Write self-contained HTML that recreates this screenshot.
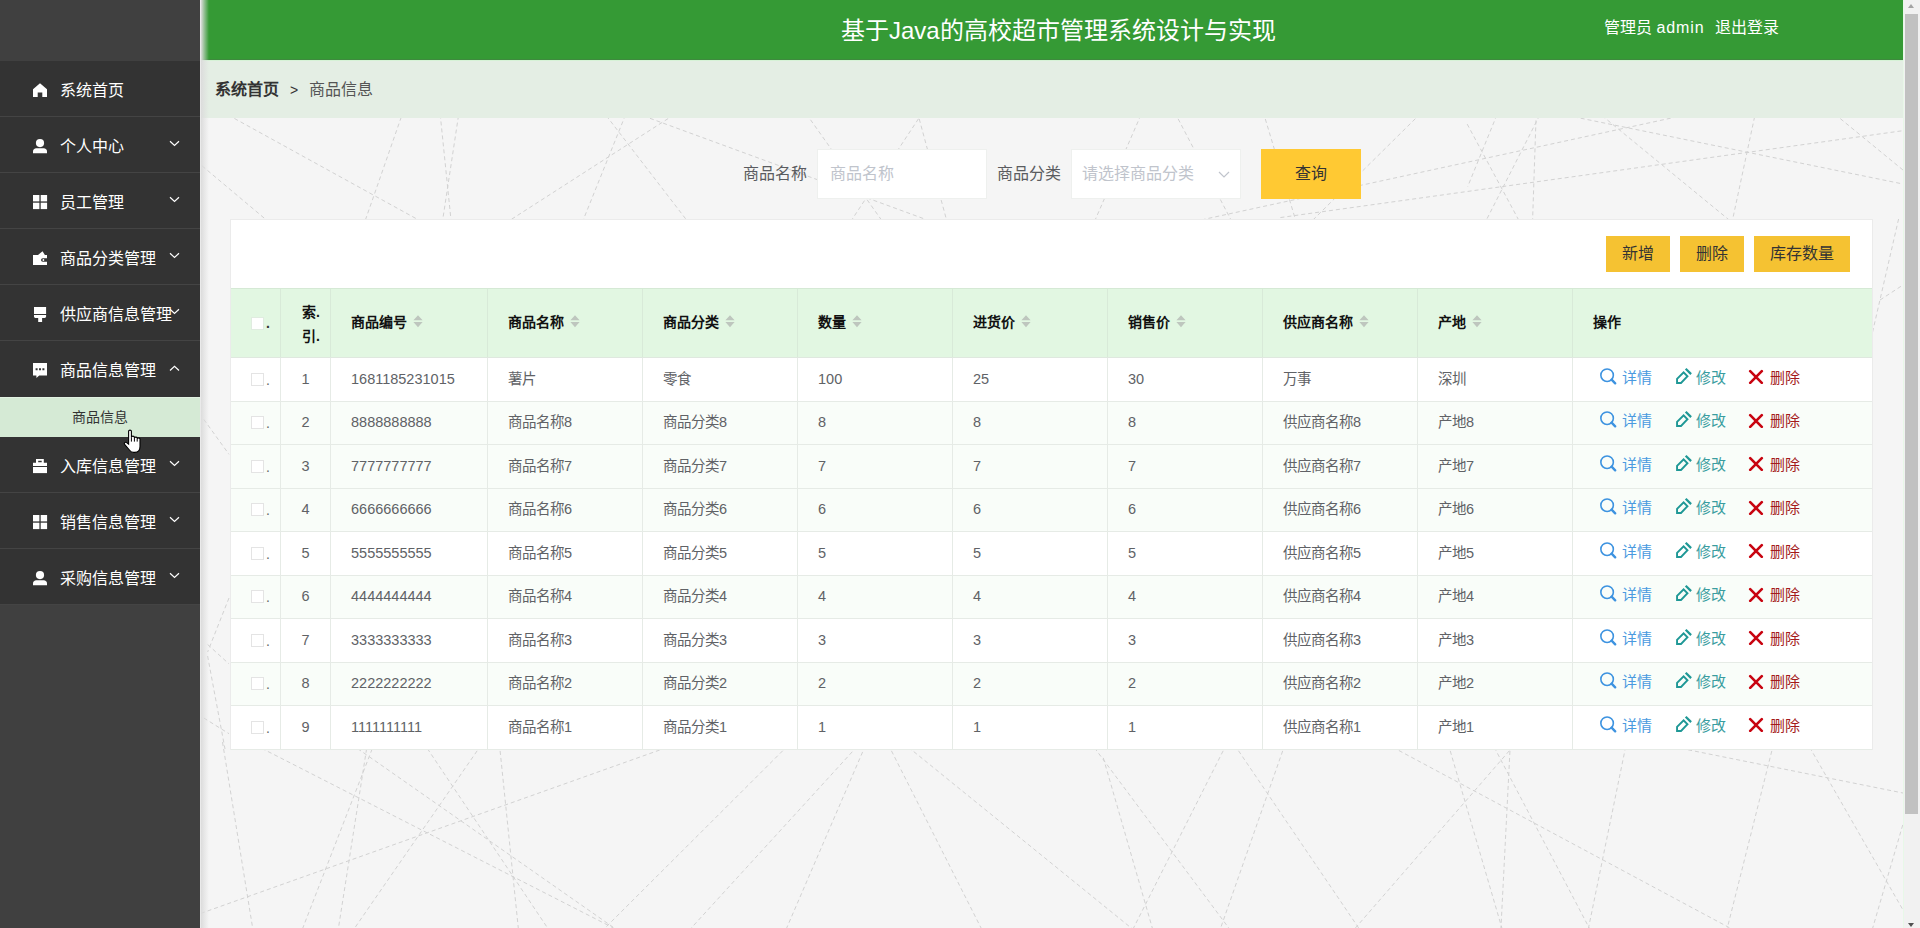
<!DOCTYPE html>
<html lang="zh-CN">
<head>
<meta charset="utf-8">
<style>
*{box-sizing:border-box;margin:0;padding:0}
html,body{width:1920px;height:928px;overflow:hidden;font-family:"Liberation Sans",sans-serif;background:#f5f5f5}
#side{position:absolute;left:0;top:0;width:200px;height:928px;background:#404040}
#side .item{position:absolute;left:0;width:200px;height:56px;background:#333;border-bottom:1px solid #444;color:#fff;font-size:16px}
#side .item.nob{border-bottom:none}
#side .ic{position:absolute;left:33px;top:22px}
#side .tx{position:absolute;left:60px;top:19px;line-height:22px;white-space:nowrap}
#side .ar{position:absolute;left:169px;top:23px}
#side .ar.up{top:24px}
#side .sub{position:absolute;left:0;width:200px;height:40px;background:#d5ead5;border-top:1px solid #e2f2e2;color:#333;font-size:14px;text-align:center;line-height:38px}
#main{position:absolute;left:200px;top:0;width:1703px;height:928px;background:#f5f5f5;overflow:hidden}
#bg{position:absolute;left:0;top:0;width:1703px;height:928px}
#lshadow{position:absolute;left:0;top:0;width:9px;height:928px;background:linear-gradient(to right,#eaeaea 0,#eaeaea 1px,#dcdcdc 1px,rgba(220,220,220,.6) 4px,rgba(230,230,230,0) 9px);z-index:5}
#hdr{position:absolute;left:0;top:0;width:1703px;height:60px;background:#359a35;border-bottom:1px solid #3e8a3e;color:#fff}
#hdr .title{position:absolute;left:641px;top:16px;font-size:24px;line-height:30px;white-space:nowrap}
#hdr .user{position:absolute;left:1404px;top:17px;font-size:16px;line-height:22px;white-space:nowrap}
#hdr .out{margin-left:10px}
#hdr .adm{letter-spacing:0.9px}
#crumb{position:absolute;left:0;top:60px;width:1703px;height:58px;background:#e4eee4;border-top:1px solid #d6f2d6;font-size:16px;color:#333}
#crumb .a{position:absolute;left:15px;top:18px;line-height:22px;font-weight:bold;color:#333}
#crumb .sep{position:absolute;left:90px;top:18px;line-height:22px;font-size:14px}
#crumb .b{position:absolute;left:109px;top:18px;line-height:22px;color:#555}
#search .lbl{position:absolute;top:163px;font-size:16px;line-height:22px;color:#5a5c60;white-space:nowrap}
#search .l1{left:543px}
#search .l2{left:797px}
#search .inp{position:absolute;top:149px;height:50px;background:#fff;border:1px solid #eef0ee;font-size:16px;color:#c0c4cc;line-height:48px;padding-left:12px;white-space:nowrap}
#search .i1{left:617px;width:170px}
#search .i2{left:871px;width:170px;padding-left:10px}
#search .selar{position:absolute;left:146px;top:21px}
#search .qbtn{position:absolute;left:1061px;top:149px;width:100px;height:50px;background:#ffc933;color:#333;font-size:16px;line-height:50px;text-align:center}
#panel{position:absolute;left:30px;top:219px;width:1643px;height:531px;background:#fff;border:1px solid #ebebeb}
#panel .btn{position:absolute;top:16px;height:36px;background:#f5c232;color:#333;font-size:16px;line-height:36px;text-align:center}
#panel .b1{left:1375px;width:64px}
#panel .b2{left:1449px;width:64px}
#panel .b3{left:1523px;width:96px}
.thead{position:absolute;left:0;top:68px;width:1641px;height:70px;background:#e2f7e2;border-top:1px solid #d5e9d5;border-bottom:1px solid #dfe8df}
.th{position:absolute;top:0;height:68px;border-left:1px solid #d8ead8}
.th:first-child{border-left:none}
.th .htx{position:absolute;left:20px;top:23px;line-height:20px;font-size:14px;font-weight:bold;color:#111;white-space:nowrap}
.th .sort{position:absolute;top:27px}
.th.idx .l1{position:absolute;left:21px;top:13px;font-size:14px;font-weight:bold;line-height:20px;color:#111}
.th.idx .l2{position:absolute;left:21px;top:37px;font-size:14px;font-weight:bold;line-height:20px;color:#111}
.cb{position:absolute;left:20px;width:13px;height:13px;background:#fff;border:1px solid #e4e4e4}
.hcb{top:28px;border-color:#e0ece0}
.dot{position:absolute;left:35px;font-size:14px;font-weight:bold;color:#333}
.hdot{top:24px;line-height:20px}
.tr{position:absolute;left:0;width:1641px;background:#fff;border-bottom:1px solid #e6ebe6}
.tr.stripe{background:#f9fdf9}
.td{position:absolute;top:0;height:100%;border-left:1px solid #e6ebe6}
.td:first-child{border-left:none}
.td .cb{top:50%;margin-top:-7px}
.td .dot{top:50%;margin-top:-10px;line-height:20px;font-weight:normal;color:#666}
.td .tx{position:absolute;left:20px;top:50%;margin-top:-12px;line-height:22px;font-size:14.5px;color:#606266;white-space:nowrap}
.td.c .tx{left:0;width:100%;text-align:center}
.ops .op{position:absolute;top:50%;margin-top:-13px;height:20px;white-space:nowrap}
.ops .op svg{position:absolute;left:0;top:0px}
.ops .op b{position:absolute;left:22px;top:1px;line-height:20px;font-size:15px;font-weight:normal}
.ops .o1{left:27px}
.ops .o1 b{color:#4a9ae0}
.ops .o2{left:102px}
.ops .o2 b{color:#3a9da0;left:21px}
.ops .o3{left:176px}
.ops .o3 b{color:#a41a1a;left:21px}
#scroll{position:absolute;left:1903px;top:0;width:17px;height:928px;background:#f1f1f1;border-left:1px solid #e8f8e8}
#scroll .thumb{position:absolute;left:1px;top:14px;width:13px;height:800px;background:#c1c1c1}
#scroll .up{position:absolute;left:4px;top:4px;width:0;height:0;border-left:3.5px solid transparent;border-right:3.5px solid transparent;border-bottom:4px solid #a3a3a3}
#scroll .down{position:absolute;left:4px;top:923px;width:0;height:0;border-left:3.5px solid transparent;border-right:3.5px solid transparent;border-top:4px solid #505050}
#cursor{position:absolute;left:123px;top:429px;z-index:20}
.th .htx .sort{position:relative;top:1px;margin-left:6px;vertical-align:baseline}
.ops .o2 svg{top:1px}
.ops .o3 svg{top:1.5px;left:-1px}
.ops .o1 svg{top:1px}

</style>
</head>
<body>
<div id="side">
<div class="item" style="top:61px"><svg class="ic" width="15" height="16" viewBox="0 0 15 16" fill="#fff"><path d="M7 0.2 L14 6.2 V14 H9.3 V9.5 H4.7 V14 H0 V6.2 Z"/></svg><span class="tx">系统首页</span></div><div class="item" style="top:117px"><svg class="ic" width="15" height="16" viewBox="0 0 15 16" fill="#fff"><circle cx="7" cy="4.1" r="4.1"/><path d="M0 14.2 V12.2 C0 10.6 1.5 9.2 3.2 9.2 H10.8 C12.5 9.2 14 10.6 14 12.2 V14.2 Z"/></svg><span class="tx">个人中心</span><svg class="ar" width="12" height="8" viewBox="0 0 12 8"><path d="M1 1.3 L5.5 5.5 L10 1.3" fill="none" stroke="#fff" stroke-width="1.2"/></svg></div><div class="item" style="top:173px"><svg class="ic" width="15" height="16" viewBox="0 0 15 16" fill="#fff"><rect x="0" y="0" width="6.4" height="6.4"/><rect x="7.7" y="0" width="6.4" height="6.4"/><rect x="0" y="7.7" width="6.4" height="6.4"/><rect x="7.7" y="7.7" width="6.4" height="6.4"/></svg><span class="tx">员工管理</span><svg class="ar" width="12" height="8" viewBox="0 0 12 8"><path d="M1 1.3 L5.5 5.5 L10 1.3" fill="none" stroke="#fff" stroke-width="1.2"/></svg></div><div class="item" style="top:229px"><svg class="ic" width="15" height="16" viewBox="0 0 15 16" fill="#fff"><path d="M5 3.9 L9.5 0.2 L11.9 3.9 Z"/><path d="M0 3.9 H14 V7.2 H9.8 A1.8 1.8 0 0 0 9.8 10.8 H14 V14.1 H0 Z"/><circle cx="10.4" cy="9" r="0.9"/></svg><span class="tx">商品分类管理</span><svg class="ar" width="12" height="8" viewBox="0 0 12 8"><path d="M1 1.3 L5.5 5.5 L10 1.3" fill="none" stroke="#fff" stroke-width="1.2"/></svg></div><div class="item" style="top:285px"><svg class="ic" width="15" height="16" viewBox="0 0 15 16" fill="#fff"><rect x="1" y="0" width="12.1" height="7"/><path d="M1 8 H13.1 V9.6 C13.1 10.4 12.5 10.9 11.7 10.9 H9.1 V15 H5.2 V10.9 H2.4 C1.6 10.9 1 10.4 1 9.6 Z"/></svg><span class="tx">供应商信息管理</span><svg class="ar" width="12" height="8" viewBox="0 0 12 8"><path d="M1 1.3 L5.5 5.5 L10 1.3" fill="none" stroke="#fff" stroke-width="1.2"/></svg></div><div class="item nob" style="top:341px"><svg class="ic" width="15" height="16" viewBox="0 0 15 16" fill="#fff"><path d="M0 0 H14 V12.4 H6.2 L3.4 15 V12.4 H0 Z M2.6 5.3 V7.3 H4.6 V5.3 Z M6 5.3 V7.3 H8 V5.3 Z M9.4 5.3 V7.3 H11.4 V5.3 Z" fill-rule="evenodd"/></svg><span class="tx">商品信息管理</span><svg class="ar up" width="12" height="8" viewBox="0 0 12 8"><path d="M1 5.5 L5.5 1.3 L10 5.5" fill="none" stroke="#fff" stroke-width="1.2"/></svg></div><div class="sub" style="top:397px">商品信息</div><div class="item" style="top:437px"><svg class="ic" width="15" height="16" viewBox="0 0 15 16" fill="#fff"><path d="M3 0 H10.8 V3.8 H14 V7 H0 V3.8 H3 Z M5.2 1.7 V3.3 H8.7 V1.7 Z" fill-rule="evenodd"/><rect x="0" y="8" width="14" height="6.1"/></svg><span class="tx">入库信息管理</span><svg class="ar" width="12" height="8" viewBox="0 0 12 8"><path d="M1 1.3 L5.5 5.5 L10 1.3" fill="none" stroke="#fff" stroke-width="1.2"/></svg></div><div class="item" style="top:493px"><svg class="ic" width="15" height="16" viewBox="0 0 15 16" fill="#fff"><rect x="0" y="0" width="6.4" height="6.4"/><rect x="7.7" y="0" width="6.4" height="6.4"/><rect x="0" y="7.7" width="6.4" height="6.4"/><rect x="7.7" y="7.7" width="6.4" height="6.4"/></svg><span class="tx">销售信息管理</span><svg class="ar" width="12" height="8" viewBox="0 0 12 8"><path d="M1 1.3 L5.5 5.5 L10 1.3" fill="none" stroke="#fff" stroke-width="1.2"/></svg></div><div class="item" style="top:549px"><svg class="ic" width="15" height="16" viewBox="0 0 15 16" fill="#fff"><circle cx="7" cy="4.1" r="4.1"/><path d="M0 14.2 V12.2 C0 10.6 1.5 9.2 3.2 9.2 H10.8 C12.5 9.2 14 10.6 14 12.2 V14.2 Z"/></svg><span class="tx">采购信息管理</span><svg class="ar" width="12" height="8" viewBox="0 0 12 8"><path d="M1 1.3 L5.5 5.5 L10 1.3" fill="none" stroke="#fff" stroke-width="1.2"/></svg></div>
</div>
<div id="main">
  <div id="bg"><svg width="1703" height="928" style="position:absolute;left:0;top:0"><g stroke="#d2d2d2" stroke-width="1" stroke-dasharray="4 3" fill="none"><line x1="22.5" y1="742.1" x2="53.6" y2="933.9"/><line x1="61.7" y1="748.3" x2="412.9" y2="927.7"/><line x1="151.9" y1="744.6" x2="414.8" y2="928.4"/><line x1="227.4" y1="748.6" x2="350.4" y2="932.2"/><line x1="-5.7" y1="915.7" x2="468.2" y2="747.0"/><line x1="174.7" y1="742.4" x2="101.8" y2="930.6"/><line x1="166.6" y1="748.8" x2="138.0" y2="930.9"/><line x1="281.1" y1="745.1" x2="153.4" y2="929.9"/><line x1="299.4" y1="744.0" x2="318.6" y2="931.0"/><line x1="587.7" y1="745.8" x2="400.8" y2="932.2"/><line x1="657.0" y1="746.6" x2="490.0" y2="929.4"/><line x1="665.4" y1="745.5" x2="585.6" y2="930.5"/><line x1="688.3" y1="744.6" x2="783.3" y2="932.4"/><line x1="708.3" y1="747.2" x2="934.7" y2="930.8"/><line x1="894.4" y1="747.7" x2="1031.6" y2="931.8"/><line x1="903.3" y1="757.9" x2="953.7" y2="932.8"/><line x1="1026.3" y1="744.6" x2="931.3" y2="932.4"/><line x1="1034.6" y1="745.0" x2="1161.4" y2="932.0"/><line x1="1085.0" y1="744.3" x2="1019.0" y2="932.7"/><line x1="1192.7" y1="747.2" x2="1533.3" y2="929.8"/><line x1="1248.3" y1="744.2" x2="1302.7" y2="930.8"/><line x1="1313.9" y1="745.5" x2="1154.1" y2="929.5"/><line x1="1294.2" y1="747.2" x2="1391.5" y2="932.3"/><line x1="1310.3" y1="744.0" x2="1300.7" y2="933.0"/><line x1="1425.7" y1="746.6" x2="1387.5" y2="932.9"/><line x1="1488.1" y1="749.8" x2="1708.9" y2="794.2"/><line x1="1573.5" y1="744.2" x2="1526.1" y2="932.8"/><line x1="1609.7" y1="747.3" x2="1706.0" y2="915.2"/><line x1="1704.7" y1="818.2" x2="1671.3" y2="932.8"/><line x1="28.3" y1="115.1" x2="220.3" y2="220.9"/><line x1="2.1" y1="165.9" x2="67.3" y2="220.7"/><line x1="201.3" y1="117.0" x2="164.9" y2="221.4"/><line x1="240.2" y1="114.5" x2="251.4" y2="223.9"/><line x1="258.5" y1="115.7" x2="242.1" y2="223.8"/><line x1="474.0" y1="114.8" x2="308.5" y2="221.2"/><line x1="425.5" y1="114.9" x2="381.8" y2="223.5"/><line x1="406.3" y1="115.7" x2="488.7" y2="222.8"/><line x1="443.4" y1="115.9" x2="727.6" y2="220.1"/><line x1="606.5" y1="114.1" x2="683.5" y2="222.9"/><line x1="722.3" y1="113.0" x2="649.7" y2="223.0"/><line x1="717.4" y1="112.2" x2="747.6" y2="223.8"/><line x1="940.9" y1="115.0" x2="893.6" y2="223.5"/><line x1="974.9" y1="112.7" x2="1032.8" y2="223.3"/><line x1="1063.3" y1="112.3" x2="1096.7" y2="223.7"/><line x1="1220.3" y1="113.8" x2="1110.7" y2="222.2"/><line x1="1477.5" y1="116.7" x2="1004.1" y2="219.3"/><line x1="1701.4" y1="130.9" x2="1080.1" y2="217.6"/><line x1="1296.9" y1="114.9" x2="1267.7" y2="186.6"/><line x1="1339.7" y1="115.2" x2="1285.3" y2="222.1"/><line x1="1267.2" y1="124.1" x2="1319.8" y2="222.1"/><line x1="1336.2" y1="113.4" x2="1332.5" y2="222.8"/><line x1="1373.8" y1="116.8" x2="1708.9" y2="185.2"/><line x1="1402.0" y1="115.6" x2="1529.9" y2="220.6"/><line x1="1554.6" y1="116.8" x2="1531.7" y2="223.8"/><line x1="1634.9" y1="114.2" x2="1707.6" y2="173.8"/><line x1="3.8" y1="419.4" x2="29.0" y2="454.3"/><line x1="29.0" y1="598.0" x2="7.6" y2="652.0"/><line x1="7.6" y1="644.5" x2="29.0" y2="663.9"/><line x1="7.6" y1="656.0" x2="25.0" y2="749.0"/><line x1="3.8" y1="718.0" x2="29.0" y2="733.7"/><line x1="1698.6" y1="219.0" x2="1672.0" y2="334.5"/><line x1="1680.0" y1="300.0" x2="1703.0" y2="285.0"/></g></svg></div>
  <div id="hdr">
    <div class="title">基于Java的高校超市管理系统设计与实现</div>
    <div class="user"><span>管理员 <span class="adm">admin</span></span><span class="out">退出登录</span></div>
  </div>
  <div id="crumb"><span class="a">系统首页</span><span class="sep">&gt;</span><span class="b">商品信息</span></div>
  <div id="search">
    <span class="lbl l1">商品名称</span>
    <div class="inp i1">商品名称</div>
    <span class="lbl l2">商品分类</span>
    <div class="inp i2">请选择商品分类<svg class="selar" width="12" height="8" viewBox="0 0 12 8"><path d="M1 1 L6 6 L11 1" fill="none" stroke="#c0c4cc" stroke-width="1.2"/></svg></div>
    <div class="qbtn">查询</div>
  </div>
  <div id="panel">
    <div class="btn b1">新增</div><div class="btn b2">删除</div><div class="btn b3">库存数量</div>
    <div class="thead">
<div class="th" style="left:0px;width:49px"><span class="cb hcb"></span><span class="dot hdot">.</span></div>
<div class="th idx" style="left:49px;width:50px"><span class="l1">索.</span><span class="l2">引.</span></div>
<div class="th" style="left:99px;width:157px"><span class="htx">商品编号<svg class="sort" width="10" height="13" viewBox="0 0 10 13"><path d="M5 0.3 L9.6 5.2 H0.4 Z M5 12.3 L9.6 7.1 H0.4 Z" fill="#bec6be"/></svg></span></div>
<div class="th" style="left:256px;width:155px"><span class="htx">商品名称<svg class="sort" width="10" height="13" viewBox="0 0 10 13"><path d="M5 0.3 L9.6 5.2 H0.4 Z M5 12.3 L9.6 7.1 H0.4 Z" fill="#bec6be"/></svg></span></div>
<div class="th" style="left:411px;width:155px"><span class="htx">商品分类<svg class="sort" width="10" height="13" viewBox="0 0 10 13"><path d="M5 0.3 L9.6 5.2 H0.4 Z M5 12.3 L9.6 7.1 H0.4 Z" fill="#bec6be"/></svg></span></div>
<div class="th" style="left:566px;width:155px"><span class="htx">数量<svg class="sort" width="10" height="13" viewBox="0 0 10 13"><path d="M5 0.3 L9.6 5.2 H0.4 Z M5 12.3 L9.6 7.1 H0.4 Z" fill="#bec6be"/></svg></span></div>
<div class="th" style="left:721px;width:155px"><span class="htx">进货价<svg class="sort" width="10" height="13" viewBox="0 0 10 13"><path d="M5 0.3 L9.6 5.2 H0.4 Z M5 12.3 L9.6 7.1 H0.4 Z" fill="#bec6be"/></svg></span></div>
<div class="th" style="left:876px;width:155px"><span class="htx">销售价<svg class="sort" width="10" height="13" viewBox="0 0 10 13"><path d="M5 0.3 L9.6 5.2 H0.4 Z M5 12.3 L9.6 7.1 H0.4 Z" fill="#bec6be"/></svg></span></div>
<div class="th" style="left:1031px;width:155px"><span class="htx">供应商名称<svg class="sort" width="10" height="13" viewBox="0 0 10 13"><path d="M5 0.3 L9.6 5.2 H0.4 Z M5 12.3 L9.6 7.1 H0.4 Z" fill="#bec6be"/></svg></span></div>
<div class="th" style="left:1186px;width:155px"><span class="htx">产地<svg class="sort" width="10" height="13" viewBox="0 0 10 13"><path d="M5 0.3 L9.6 5.2 H0.4 Z M5 12.3 L9.6 7.1 H0.4 Z" fill="#bec6be"/></svg></span></div>
<div class="th" style="left:1341px;width:300px"><span class="htx">操作</span></div>
</div>
<div class="tr" style="top:138px;height:44px">
<div class="td" style="left:0px;width:49px"><span class="cb"></span><span class="dot">.</span></div>
<div class="td c" style="left:49px;width:50px"><span class="tx">1</span></div>
<div class="td" style="left:99px;width:157px"><span class="tx">1681185231015</span></div>
<div class="td" style="left:256px;width:155px"><span class="tx">薯片</span></div>
<div class="td" style="left:411px;width:155px"><span class="tx">零食</span></div>
<div class="td" style="left:566px;width:155px"><span class="tx">100</span></div>
<div class="td" style="left:721px;width:155px"><span class="tx">25</span></div>
<div class="td" style="left:876px;width:155px"><span class="tx">30</span></div>
<div class="td" style="left:1031px;width:155px"><span class="tx">万事</span></div>
<div class="td" style="left:1186px;width:155px"><span class="tx">深圳</span></div>
<div class="td ops" style="left:1341px;width:300px"><span class="op o1"><svg width="18" height="18" viewBox="0 0 18 18" style="overflow:visible"><circle cx="7.1" cy="7.2" r="6.25" fill="none" stroke="#3d93e0" stroke-width="1.6"/><path d="M11.6 11.7 L15.2 15.3" stroke="#3d93e0" stroke-width="2.4" stroke-linecap="round"/></svg><b>详情</b></span><span class="op o2"><svg width="18" height="18" viewBox="0 0 18 18" style="overflow:visible"><path d="M1.1 15.9 V10.5 L8.6 3 L13.8 8.2 L6.4 15.9 Z M3 14 H5.6 L11.1 8.2 L8.6 5.7 L3 11.3 Z" fill="#1f9896" fill-rule="evenodd"/><path d="M9.9 1.4 L11.5 -0.1 L16.9 5.3 L15.3 6.9 Z" fill="#1f9896"/></svg><b>修改</b></span><span class="op o3"><svg width="16" height="16" viewBox="0 0 16 16"><path d="M2.2 3.2 L13.8 14.8 M13.8 3.2 L2.2 14.8" stroke="#c80410" stroke-width="2.6" stroke-linecap="round"/></svg><b>删除</b></span></div>
</div>
<div class="tr stripe" style="top:182px;height:43px">
<div class="td" style="left:0px;width:49px"><span class="cb"></span><span class="dot">.</span></div>
<div class="td c" style="left:49px;width:50px"><span class="tx">2</span></div>
<div class="td" style="left:99px;width:157px"><span class="tx">8888888888</span></div>
<div class="td" style="left:256px;width:155px"><span class="tx">商品名称8</span></div>
<div class="td" style="left:411px;width:155px"><span class="tx">商品分类8</span></div>
<div class="td" style="left:566px;width:155px"><span class="tx">8</span></div>
<div class="td" style="left:721px;width:155px"><span class="tx">8</span></div>
<div class="td" style="left:876px;width:155px"><span class="tx">8</span></div>
<div class="td" style="left:1031px;width:155px"><span class="tx">供应商名称8</span></div>
<div class="td" style="left:1186px;width:155px"><span class="tx">产地8</span></div>
<div class="td ops" style="left:1341px;width:300px"><span class="op o1"><svg width="18" height="18" viewBox="0 0 18 18" style="overflow:visible"><circle cx="7.1" cy="7.2" r="6.25" fill="none" stroke="#3d93e0" stroke-width="1.6"/><path d="M11.6 11.7 L15.2 15.3" stroke="#3d93e0" stroke-width="2.4" stroke-linecap="round"/></svg><b>详情</b></span><span class="op o2"><svg width="18" height="18" viewBox="0 0 18 18" style="overflow:visible"><path d="M1.1 15.9 V10.5 L8.6 3 L13.8 8.2 L6.4 15.9 Z M3 14 H5.6 L11.1 8.2 L8.6 5.7 L3 11.3 Z" fill="#1f9896" fill-rule="evenodd"/><path d="M9.9 1.4 L11.5 -0.1 L16.9 5.3 L15.3 6.9 Z" fill="#1f9896"/></svg><b>修改</b></span><span class="op o3"><svg width="16" height="16" viewBox="0 0 16 16"><path d="M2.2 3.2 L13.8 14.8 M13.8 3.2 L2.2 14.8" stroke="#c80410" stroke-width="2.6" stroke-linecap="round"/></svg><b>删除</b></span></div>
</div>
<div class="tr stripe" style="top:225px;height:44px">
<div class="td" style="left:0px;width:49px"><span class="cb"></span><span class="dot">.</span></div>
<div class="td c" style="left:49px;width:50px"><span class="tx">3</span></div>
<div class="td" style="left:99px;width:157px"><span class="tx">7777777777</span></div>
<div class="td" style="left:256px;width:155px"><span class="tx">商品名称7</span></div>
<div class="td" style="left:411px;width:155px"><span class="tx">商品分类7</span></div>
<div class="td" style="left:566px;width:155px"><span class="tx">7</span></div>
<div class="td" style="left:721px;width:155px"><span class="tx">7</span></div>
<div class="td" style="left:876px;width:155px"><span class="tx">7</span></div>
<div class="td" style="left:1031px;width:155px"><span class="tx">供应商名称7</span></div>
<div class="td" style="left:1186px;width:155px"><span class="tx">产地7</span></div>
<div class="td ops" style="left:1341px;width:300px"><span class="op o1"><svg width="18" height="18" viewBox="0 0 18 18" style="overflow:visible"><circle cx="7.1" cy="7.2" r="6.25" fill="none" stroke="#3d93e0" stroke-width="1.6"/><path d="M11.6 11.7 L15.2 15.3" stroke="#3d93e0" stroke-width="2.4" stroke-linecap="round"/></svg><b>详情</b></span><span class="op o2"><svg width="18" height="18" viewBox="0 0 18 18" style="overflow:visible"><path d="M1.1 15.9 V10.5 L8.6 3 L13.8 8.2 L6.4 15.9 Z M3 14 H5.6 L11.1 8.2 L8.6 5.7 L3 11.3 Z" fill="#1f9896" fill-rule="evenodd"/><path d="M9.9 1.4 L11.5 -0.1 L16.9 5.3 L15.3 6.9 Z" fill="#1f9896"/></svg><b>修改</b></span><span class="op o3"><svg width="16" height="16" viewBox="0 0 16 16"><path d="M2.2 3.2 L13.8 14.8 M13.8 3.2 L2.2 14.8" stroke="#c80410" stroke-width="2.6" stroke-linecap="round"/></svg><b>删除</b></span></div>
</div>
<div class="tr stripe" style="top:269px;height:43px">
<div class="td" style="left:0px;width:49px"><span class="cb"></span><span class="dot">.</span></div>
<div class="td c" style="left:49px;width:50px"><span class="tx">4</span></div>
<div class="td" style="left:99px;width:157px"><span class="tx">6666666666</span></div>
<div class="td" style="left:256px;width:155px"><span class="tx">商品名称6</span></div>
<div class="td" style="left:411px;width:155px"><span class="tx">商品分类6</span></div>
<div class="td" style="left:566px;width:155px"><span class="tx">6</span></div>
<div class="td" style="left:721px;width:155px"><span class="tx">6</span></div>
<div class="td" style="left:876px;width:155px"><span class="tx">6</span></div>
<div class="td" style="left:1031px;width:155px"><span class="tx">供应商名称6</span></div>
<div class="td" style="left:1186px;width:155px"><span class="tx">产地6</span></div>
<div class="td ops" style="left:1341px;width:300px"><span class="op o1"><svg width="18" height="18" viewBox="0 0 18 18" style="overflow:visible"><circle cx="7.1" cy="7.2" r="6.25" fill="none" stroke="#3d93e0" stroke-width="1.6"/><path d="M11.6 11.7 L15.2 15.3" stroke="#3d93e0" stroke-width="2.4" stroke-linecap="round"/></svg><b>详情</b></span><span class="op o2"><svg width="18" height="18" viewBox="0 0 18 18" style="overflow:visible"><path d="M1.1 15.9 V10.5 L8.6 3 L13.8 8.2 L6.4 15.9 Z M3 14 H5.6 L11.1 8.2 L8.6 5.7 L3 11.3 Z" fill="#1f9896" fill-rule="evenodd"/><path d="M9.9 1.4 L11.5 -0.1 L16.9 5.3 L15.3 6.9 Z" fill="#1f9896"/></svg><b>修改</b></span><span class="op o3"><svg width="16" height="16" viewBox="0 0 16 16"><path d="M2.2 3.2 L13.8 14.8 M13.8 3.2 L2.2 14.8" stroke="#c80410" stroke-width="2.6" stroke-linecap="round"/></svg><b>删除</b></span></div>
</div>
<div class="tr" style="top:312px;height:44px">
<div class="td" style="left:0px;width:49px"><span class="cb"></span><span class="dot">.</span></div>
<div class="td c" style="left:49px;width:50px"><span class="tx">5</span></div>
<div class="td" style="left:99px;width:157px"><span class="tx">5555555555</span></div>
<div class="td" style="left:256px;width:155px"><span class="tx">商品名称5</span></div>
<div class="td" style="left:411px;width:155px"><span class="tx">商品分类5</span></div>
<div class="td" style="left:566px;width:155px"><span class="tx">5</span></div>
<div class="td" style="left:721px;width:155px"><span class="tx">5</span></div>
<div class="td" style="left:876px;width:155px"><span class="tx">5</span></div>
<div class="td" style="left:1031px;width:155px"><span class="tx">供应商名称5</span></div>
<div class="td" style="left:1186px;width:155px"><span class="tx">产地5</span></div>
<div class="td ops" style="left:1341px;width:300px"><span class="op o1"><svg width="18" height="18" viewBox="0 0 18 18" style="overflow:visible"><circle cx="7.1" cy="7.2" r="6.25" fill="none" stroke="#3d93e0" stroke-width="1.6"/><path d="M11.6 11.7 L15.2 15.3" stroke="#3d93e0" stroke-width="2.4" stroke-linecap="round"/></svg><b>详情</b></span><span class="op o2"><svg width="18" height="18" viewBox="0 0 18 18" style="overflow:visible"><path d="M1.1 15.9 V10.5 L8.6 3 L13.8 8.2 L6.4 15.9 Z M3 14 H5.6 L11.1 8.2 L8.6 5.7 L3 11.3 Z" fill="#1f9896" fill-rule="evenodd"/><path d="M9.9 1.4 L11.5 -0.1 L16.9 5.3 L15.3 6.9 Z" fill="#1f9896"/></svg><b>修改</b></span><span class="op o3"><svg width="16" height="16" viewBox="0 0 16 16"><path d="M2.2 3.2 L13.8 14.8 M13.8 3.2 L2.2 14.8" stroke="#c80410" stroke-width="2.6" stroke-linecap="round"/></svg><b>删除</b></span></div>
</div>
<div class="tr stripe" style="top:356px;height:43px">
<div class="td" style="left:0px;width:49px"><span class="cb"></span><span class="dot">.</span></div>
<div class="td c" style="left:49px;width:50px"><span class="tx">6</span></div>
<div class="td" style="left:99px;width:157px"><span class="tx">4444444444</span></div>
<div class="td" style="left:256px;width:155px"><span class="tx">商品名称4</span></div>
<div class="td" style="left:411px;width:155px"><span class="tx">商品分类4</span></div>
<div class="td" style="left:566px;width:155px"><span class="tx">4</span></div>
<div class="td" style="left:721px;width:155px"><span class="tx">4</span></div>
<div class="td" style="left:876px;width:155px"><span class="tx">4</span></div>
<div class="td" style="left:1031px;width:155px"><span class="tx">供应商名称4</span></div>
<div class="td" style="left:1186px;width:155px"><span class="tx">产地4</span></div>
<div class="td ops" style="left:1341px;width:300px"><span class="op o1"><svg width="18" height="18" viewBox="0 0 18 18" style="overflow:visible"><circle cx="7.1" cy="7.2" r="6.25" fill="none" stroke="#3d93e0" stroke-width="1.6"/><path d="M11.6 11.7 L15.2 15.3" stroke="#3d93e0" stroke-width="2.4" stroke-linecap="round"/></svg><b>详情</b></span><span class="op o2"><svg width="18" height="18" viewBox="0 0 18 18" style="overflow:visible"><path d="M1.1 15.9 V10.5 L8.6 3 L13.8 8.2 L6.4 15.9 Z M3 14 H5.6 L11.1 8.2 L8.6 5.7 L3 11.3 Z" fill="#1f9896" fill-rule="evenodd"/><path d="M9.9 1.4 L11.5 -0.1 L16.9 5.3 L15.3 6.9 Z" fill="#1f9896"/></svg><b>修改</b></span><span class="op o3"><svg width="16" height="16" viewBox="0 0 16 16"><path d="M2.2 3.2 L13.8 14.8 M13.8 3.2 L2.2 14.8" stroke="#c80410" stroke-width="2.6" stroke-linecap="round"/></svg><b>删除</b></span></div>
</div>
<div class="tr" style="top:399px;height:44px">
<div class="td" style="left:0px;width:49px"><span class="cb"></span><span class="dot">.</span></div>
<div class="td c" style="left:49px;width:50px"><span class="tx">7</span></div>
<div class="td" style="left:99px;width:157px"><span class="tx">3333333333</span></div>
<div class="td" style="left:256px;width:155px"><span class="tx">商品名称3</span></div>
<div class="td" style="left:411px;width:155px"><span class="tx">商品分类3</span></div>
<div class="td" style="left:566px;width:155px"><span class="tx">3</span></div>
<div class="td" style="left:721px;width:155px"><span class="tx">3</span></div>
<div class="td" style="left:876px;width:155px"><span class="tx">3</span></div>
<div class="td" style="left:1031px;width:155px"><span class="tx">供应商名称3</span></div>
<div class="td" style="left:1186px;width:155px"><span class="tx">产地3</span></div>
<div class="td ops" style="left:1341px;width:300px"><span class="op o1"><svg width="18" height="18" viewBox="0 0 18 18" style="overflow:visible"><circle cx="7.1" cy="7.2" r="6.25" fill="none" stroke="#3d93e0" stroke-width="1.6"/><path d="M11.6 11.7 L15.2 15.3" stroke="#3d93e0" stroke-width="2.4" stroke-linecap="round"/></svg><b>详情</b></span><span class="op o2"><svg width="18" height="18" viewBox="0 0 18 18" style="overflow:visible"><path d="M1.1 15.9 V10.5 L8.6 3 L13.8 8.2 L6.4 15.9 Z M3 14 H5.6 L11.1 8.2 L8.6 5.7 L3 11.3 Z" fill="#1f9896" fill-rule="evenodd"/><path d="M9.9 1.4 L11.5 -0.1 L16.9 5.3 L15.3 6.9 Z" fill="#1f9896"/></svg><b>修改</b></span><span class="op o3"><svg width="16" height="16" viewBox="0 0 16 16"><path d="M2.2 3.2 L13.8 14.8 M13.8 3.2 L2.2 14.8" stroke="#c80410" stroke-width="2.6" stroke-linecap="round"/></svg><b>删除</b></span></div>
</div>
<div class="tr stripe" style="top:443px;height:43px">
<div class="td" style="left:0px;width:49px"><span class="cb"></span><span class="dot">.</span></div>
<div class="td c" style="left:49px;width:50px"><span class="tx">8</span></div>
<div class="td" style="left:99px;width:157px"><span class="tx">2222222222</span></div>
<div class="td" style="left:256px;width:155px"><span class="tx">商品名称2</span></div>
<div class="td" style="left:411px;width:155px"><span class="tx">商品分类2</span></div>
<div class="td" style="left:566px;width:155px"><span class="tx">2</span></div>
<div class="td" style="left:721px;width:155px"><span class="tx">2</span></div>
<div class="td" style="left:876px;width:155px"><span class="tx">2</span></div>
<div class="td" style="left:1031px;width:155px"><span class="tx">供应商名称2</span></div>
<div class="td" style="left:1186px;width:155px"><span class="tx">产地2</span></div>
<div class="td ops" style="left:1341px;width:300px"><span class="op o1"><svg width="18" height="18" viewBox="0 0 18 18" style="overflow:visible"><circle cx="7.1" cy="7.2" r="6.25" fill="none" stroke="#3d93e0" stroke-width="1.6"/><path d="M11.6 11.7 L15.2 15.3" stroke="#3d93e0" stroke-width="2.4" stroke-linecap="round"/></svg><b>详情</b></span><span class="op o2"><svg width="18" height="18" viewBox="0 0 18 18" style="overflow:visible"><path d="M1.1 15.9 V10.5 L8.6 3 L13.8 8.2 L6.4 15.9 Z M3 14 H5.6 L11.1 8.2 L8.6 5.7 L3 11.3 Z" fill="#1f9896" fill-rule="evenodd"/><path d="M9.9 1.4 L11.5 -0.1 L16.9 5.3 L15.3 6.9 Z" fill="#1f9896"/></svg><b>修改</b></span><span class="op o3"><svg width="16" height="16" viewBox="0 0 16 16"><path d="M2.2 3.2 L13.8 14.8 M13.8 3.2 L2.2 14.8" stroke="#c80410" stroke-width="2.6" stroke-linecap="round"/></svg><b>删除</b></span></div>
</div>
<div class="tr" style="top:486px;height:44px">
<div class="td" style="left:0px;width:49px"><span class="cb"></span><span class="dot">.</span></div>
<div class="td c" style="left:49px;width:50px"><span class="tx">9</span></div>
<div class="td" style="left:99px;width:157px"><span class="tx">1111111111</span></div>
<div class="td" style="left:256px;width:155px"><span class="tx">商品名称1</span></div>
<div class="td" style="left:411px;width:155px"><span class="tx">商品分类1</span></div>
<div class="td" style="left:566px;width:155px"><span class="tx">1</span></div>
<div class="td" style="left:721px;width:155px"><span class="tx">1</span></div>
<div class="td" style="left:876px;width:155px"><span class="tx">1</span></div>
<div class="td" style="left:1031px;width:155px"><span class="tx">供应商名称1</span></div>
<div class="td" style="left:1186px;width:155px"><span class="tx">产地1</span></div>
<div class="td ops" style="left:1341px;width:300px"><span class="op o1"><svg width="18" height="18" viewBox="0 0 18 18" style="overflow:visible"><circle cx="7.1" cy="7.2" r="6.25" fill="none" stroke="#3d93e0" stroke-width="1.6"/><path d="M11.6 11.7 L15.2 15.3" stroke="#3d93e0" stroke-width="2.4" stroke-linecap="round"/></svg><b>详情</b></span><span class="op o2"><svg width="18" height="18" viewBox="0 0 18 18" style="overflow:visible"><path d="M1.1 15.9 V10.5 L8.6 3 L13.8 8.2 L6.4 15.9 Z M3 14 H5.6 L11.1 8.2 L8.6 5.7 L3 11.3 Z" fill="#1f9896" fill-rule="evenodd"/><path d="M9.9 1.4 L11.5 -0.1 L16.9 5.3 L15.3 6.9 Z" fill="#1f9896"/></svg><b>修改</b></span><span class="op o3"><svg width="16" height="16" viewBox="0 0 16 16"><path d="M2.2 3.2 L13.8 14.8 M13.8 3.2 L2.2 14.8" stroke="#c80410" stroke-width="2.6" stroke-linecap="round"/></svg><b>删除</b></span></div>
</div>
  </div>
  <div id="lshadow"></div>
</div>
<div id="scroll"><div class="up"></div><div class="thumb"></div><div class="down"></div></div>
<svg id="cursor" width="20" height="24" viewBox="0 0 20 24"><path d="M5.6 2.2 C5.6 0.8 8.4 0.8 8.4 2.2 V8.2 C8.6 6.8 11.2 6.8 11.4 8.2 V9 C11.6 7.8 14 7.8 14.2 9 V9.8 C14.4 8.8 16.8 8.8 17 9.8 V17.5 C17 21 15 23.4 11.8 23.4 H10.6 C8.6 23.4 7.4 22.4 6.4 21 L1.6 15.4 C0.6 14.2 2.2 12.6 3.6 13.6 L5.6 15.2 Z" fill="#fff" stroke="#000" stroke-width="1.1"/>
<path d="M8.4 8.2 V12.6 M11.4 9 V12.6 M14.2 9.8 V12.6" stroke="#000" stroke-width="1"/>
</svg>
</body>
</html>
